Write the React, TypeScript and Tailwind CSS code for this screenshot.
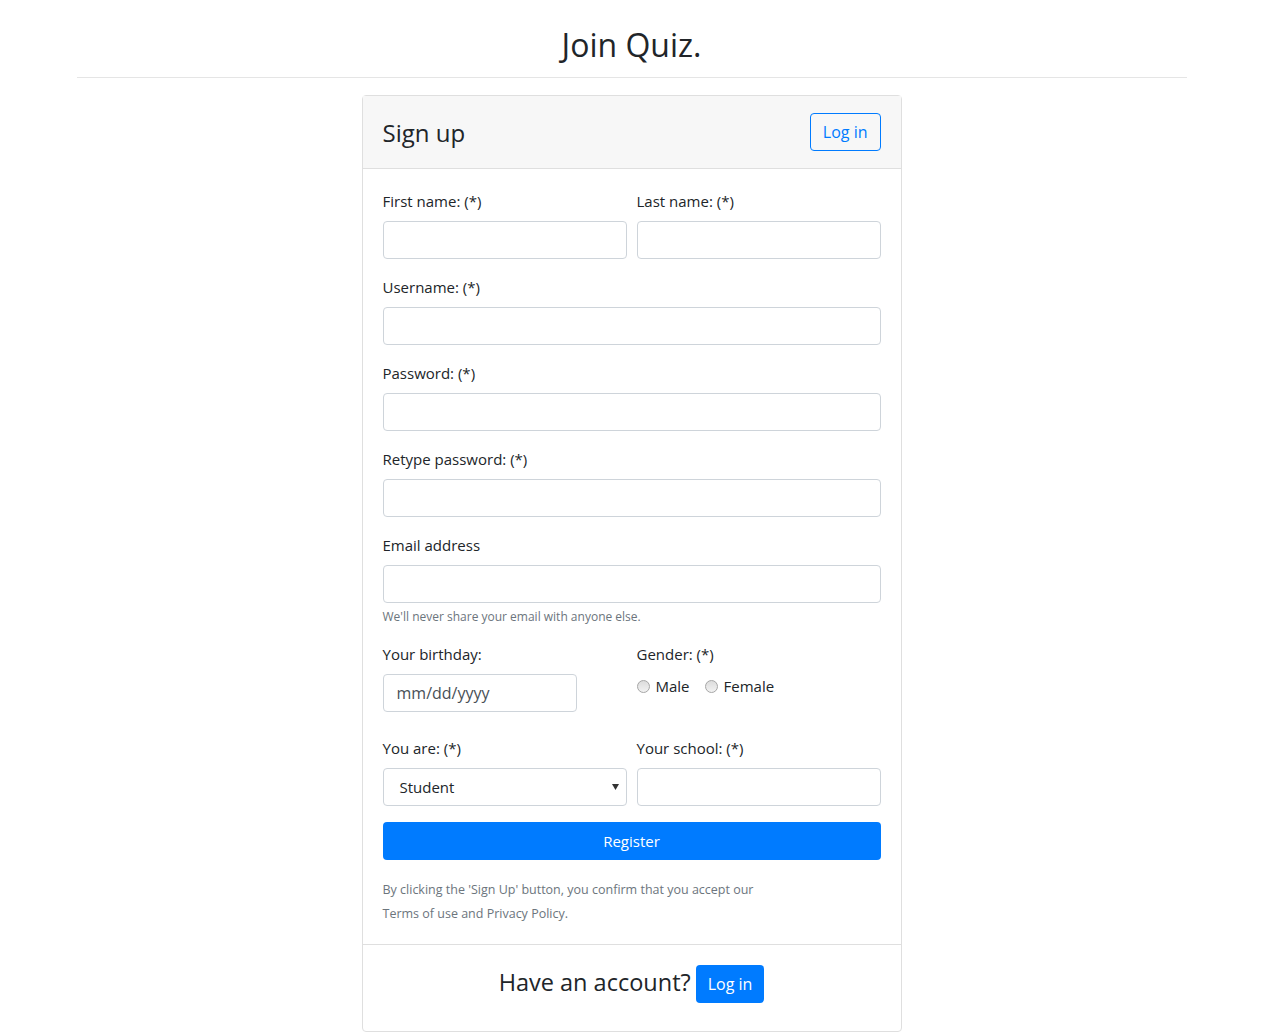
import React from "react";

function Label({ children }: { children: React.ReactNode }) {
  return <div className="mb-2 h-6 text-[15px] leading-6 text-[#212529]">{children}</div>;
}

function Input({ className = "" }: { className?: string }) {
  return (
    <div className={"h-[38px] rounded-[4px] border border-[#ced4da] bg-white " + className}></div>
  );
}

function Radio({ label }: { label: string }) {
  return (
    <div className="flex items-center">
      <span className="h-[13px] w-[13px] rounded-full border border-[#a6a6a6] bg-gradient-to-b from-[#dcdcdc] to-[#f2f2f2]"></span>
      <span className="ml-[6px] text-[15px] leading-6 text-[#212529]">{label}</span>
    </div>
  );
}

export default function App() {
  return (
    <div className="min-h-screen bg-white text-[#212529]" style={{ fontFamily: '"Open Sans", "Noto Sans", sans-serif' }}>
      <div className="mx-auto w-[1110px]">
        <h1 className="pt-[21px] text-center text-[32px] font-medium leading-[48px] text-[#212529]">Join Quiz.</h1>
        <div className="mt-[8px] h-px bg-[#e5e5e5]"></div>
        <div className="mx-auto mt-[17px] w-[540px] rounded-[4px] border border-[#dfdfdf]">
          <div className="flex h-[73px] items-center justify-between border-b border-[#dfdfdf] bg-[#f7f7f7] px-5">
            <h3 className="text-[24px] font-medium leading-[29px]">Sign up</h3>
            <button className="h-[38px] rounded-[4px] border border-[#007bff] px-3 text-[16px] text-[#007bff]">Log in</button>
          </div>
          <div className="px-5 pt-5 pb-[18px]">
            <div className="grid grid-cols-2 gap-x-[10px]">
              <div className="mb-4">
                <Label>First name: (*)</Label>
                <Input />
              </div>
              <div className="mb-4">
                <Label>Last name: (*)</Label>
                <Input />
              </div>
            </div>
            <div className="mb-4">
              <Label>Username: (*)</Label>
              <Input />
            </div>
            <div className="mb-4">
              <Label>Password: (*)</Label>
              <Input />
            </div>
            <div className="mb-4">
              <Label>Retype password: (*)</Label>
              <Input />
            </div>
            <div className="mb-4">
              <Label>Email address</Label>
              <Input />
              <div className="mt-1 text-[12px] leading-[19px] text-[#6c757d]">We'll never share your email with anyone else.</div>
            </div>
            <div className="mb-[24px] grid grid-cols-2 gap-x-[10px]">
              <div>
                <Label>Your birthday:</Label>
                <div className="flex h-[38px] w-[194px] items-center rounded-[4px] border border-[#ced4da] pl-[13px] text-[16px] text-[#495057]">mm/dd/yyyy</div>
              </div>
              <div>
                <Label>Gender: (*)</Label>
                <div className="mt-[1px] flex items-center gap-[15px]">
                  <Radio label="Male" />
                  <Radio label="Female" />
                </div>
              </div>
            </div>
            <div className="mb-4 grid grid-cols-2 gap-x-[10px]">
              <div>
                <Label>You are: (*)</Label>
                <div className="relative flex h-[38px] items-center rounded-[4px] border border-[#ced4da] pl-[16px] text-[15px] text-[#212529]">
                  Student
                  <svg className="absolute right-[7px] top-[15px]" width="7" height="6" viewBox="0 0 7 6">
                    <path d="M0 0 H7 L3.5 6 Z" fill="#333" />
                  </svg>
                </div>
              </div>
              <div>
                <Label>Your school: (*)</Label>
                <Input />
              </div>
            </div>
            <button className="h-[38px] w-full rounded-[4px] bg-[#007bff] text-[15px] text-white">Register</button>
            <p className="mt-[18px] text-[12.5px] leading-6 text-[#6c757d]">
              By clicking the 'Sign Up' button, you confirm that you accept our
              <br />
              Terms of use and Privacy Policy.
            </p>
          </div>
          <div className="flex items-start justify-center border-t border-[#dfdfdf] px-5 pt-5 pb-[28px]">
            <span className="mt-[3px] text-[23.5px] font-medium leading-[29px]">Have an account?</span>
            <button className="ml-[5px] h-[38px] rounded-[4px] bg-[#007bff] px-3 text-[16px] text-white">Log in</button>
          </div>
        </div>
      </div>
    </div>
  );
}
